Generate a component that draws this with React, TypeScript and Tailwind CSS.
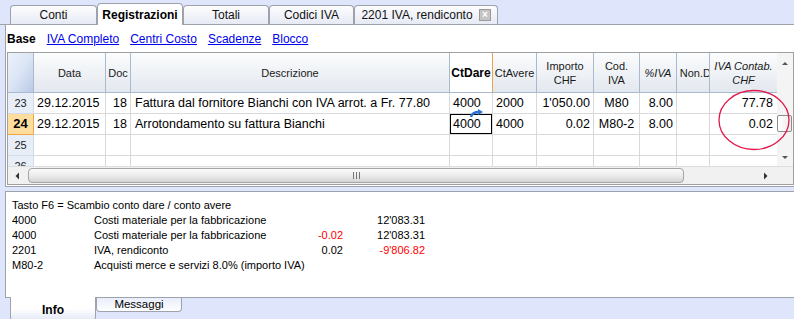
import React from "react";

const gridCols =
  "grid grid-cols-[26px_72px_25px_319px_43px_44px_57px_46px_37px_33px_68px]";

function TopTab({
  label,
  active,
  w,
  close,
}: {
  label: string;
  active?: boolean;
  w: string;
  close?: boolean;
}) {
  if (active) {
    return (
      <div
        className={`${w} h-[22px] -mb-px relative z-10 flex items-center justify-center bg-white border border-b-0 border-[#9ca3ad] rounded-t-[4px] font-bold text-[12px] text-black`}
      >
        {label}
      </div>
    );
  }
  return (
    <div
      className={`${w} h-[19px] flex items-center justify-center bg-gradient-to-b from-[#fdfdfe] to-[#e6eaf4] border border-b-0 border-[#9ca3ad] rounded-t-[4px] text-[12px] text-[#111] relative`}
    >
      <span className={close ? "-ml-[18px]" : ""}>{label}</span>
      {close && (
        <div className="absolute right-[6px] top-[3px] w-[12px] h-[12px] bg-[#c4c4c4] border border-[#9a9a9a] flex items-center justify-center text-white text-[10px] leading-none font-bold">
          ×
        </div>
      )}
    </div>
  );
}

function HeaderCell({
  children,
  className = "",
}: {
  children?: React.ReactNode;
  className?: string;
}) {
  return (
    <div
      className={`h-[40px] flex items-center justify-center text-center leading-[14px] text-[11px] text-[#1a1a1a] border-r border-b border-[#a9bace] bg-gradient-to-b from-[#fbfcfd] to-[#e3e8ef] overflow-hidden whitespace-nowrap ${className}`}
    >
      {children}
    </div>
  );
}

function Cell({
  children,
  align = "left",
  className = "",
}: {
  children?: React.ReactNode;
  align?: "left" | "right" | "center";
  className?: string;
}) {
  const a =
    align === "right"
      ? "justify-end pr-[3px]"
      : align === "center"
      ? "justify-center"
      : "justify-start pl-[3px]";
  return (
    <div
      className={`h-[21px] flex items-center ${a} border-r border-b border-[#d9d9d9] text-[12.5px] text-black whitespace-nowrap overflow-hidden relative ${className}`}
    >
      {children}
    </div>
  );
}

function RowNum({ n, active }: { n: string; active?: boolean }) {
  return (
    <div
      className={
        active
          ? "h-[21px] flex items-center justify-center border-r border-b border-[#f0a848] bg-[#fedd9e] text-[13px] font-bold text-black"
          : "h-[21px] flex items-center justify-center border-r border-b border-[#d3dbe6] bg-[#e8eef8] text-[11px] text-[#222]"
      }
    >
      {n}
    </div>
  );
}

function Row({
  n,
  active,
  cells,
}: {
  n: string;
  active?: boolean;
  cells: (string | null)[];
}) {
  return (
    <>
      <RowNum n={n} active={active} />
      <Cell>{cells[0]}</Cell>
      <Cell align="right">{cells[1]}</Cell>
      <Cell className="pl-[4px]">{cells[2]}</Cell>
      <Cell>
        {cells[3]}
        {active && <div className="absolute inset-0 border border-black" />}
      </Cell>
      <Cell>{cells[4]}</Cell>
      <Cell align="right">{cells[5]}</Cell>
      <Cell align="center">{cells[6]}</Cell>
      <Cell align="right">{cells[7]}</Cell>
      <Cell>{cells[8]}</Cell>
      <Cell align="right" className="pr-[4px]">
        {cells[9]}
      </Cell>
    </>
  );
}

export default function App() {
  const empty = [null, null, null, null, null, null, null, null, null, null];
  return (
    <div className="w-[794px] h-[319px] bg-[#dfe5fa] relative overflow-hidden font-['Liberation_Sans',Arial,sans-serif]">
      {/* top tab strip */}
      <div className="h-[25px] flex items-end pl-[10px] border-b border-[#9ca3ad]">
        <TopTab label="Conti" w="w-[87px]" />
        <TopTab label="Registrazioni" w="w-[86px]" active />
        <TopTab label="Totali" w="w-[86px]" />
        <TopTab label="Codici IVA" w="w-[85px]" />
        <TopTab label="2201 IVA, rendiconto" w="w-[144px]" close />
      </div>

      {/* main panel */}
      <div className="ml-[5px] h-[162px] bg-white border-l border-b border-[#9ca3ad] flex flex-col">
        {/* sub tabs */}
        <div className="h-[27px] flex items-center pl-[1px] text-[12px]">
          <span className="font-bold text-black">Base</span>
          <span className="ml-[11px] text-[#0000ee] underline">IVA Completo</span>
          <span className="ml-[11px] text-[#0000ee] underline">Centri Costo</span>
          <span className="ml-[11px] text-[#0000ee] underline">Scadenze</span>
          <span className="ml-[11px] text-[#0000ee] underline">Blocco</span>
        </div>

        {/* grid */}
        <div className="ml-[1px] border border-[#a0a0a0] flex flex-col h-[133px]">
          <div className="flex h-[113px]">
            <div className="w-[770px] h-[113px] overflow-hidden">
              <div className={gridCols}>
                <div className="h-[40px] border-r border-b border-[#a9bace] bg-gradient-to-br from-[#edf2fb] via-[#dbe5f5] to-[#b9c9e6]" />
                <HeaderCell>Data</HeaderCell>
                <HeaderCell>Doc</HeaderCell>
                <HeaderCell>Descrizione</HeaderCell>
                <HeaderCell className="!bg-none bg-[linear-gradient(to_bottom,#fde6b4,#f9c572)] !border-r-[#eba24a] font-bold text-[12px] !text-black">
                  CtDare
                </HeaderCell>
                <HeaderCell>CtAvere</HeaderCell>
                <HeaderCell>
                  Importo
                  <br />
                  CHF
                </HeaderCell>
                <HeaderCell>
                  Cod.
                  <br />
                  IVA
                </HeaderCell>
                <HeaderCell className="italic">%IVA</HeaderCell>
                <HeaderCell className="justify-end">
                  <span className="-mr-[2px]">Non.D</span>
                </HeaderCell>
                <HeaderCell className="italic">
                  IVA Contab.
                  <br />
                  CHF
                </HeaderCell>

                <Row
                  n="23"
                  cells={[
                    "29.12.2015",
                    "18",
                    "Fattura dal fornitore Bianchi con IVA arrot. a Fr. 77.80",
                    "4000",
                    "2000",
                    "1'050.00",
                    "M80",
                    "8.00",
                    null,
                    "77.78",
                  ]}
                />
                <Row
                  n="24"
                  active
                  cells={[
                    "29.12.2015",
                    "18",
                    "Arrotondamento su fattura Bianchi",
                    "4000",
                    "4000",
                    "0.02",
                    "M80-2",
                    "8.00",
                    null,
                    "0.02",
                  ]}
                />
                <Row n="25" cells={empty} />
                <Row n="26" cells={empty} />
              </div>
            </div>
            {/* vertical scrollbar */}
            <div className="w-[16px] h-[113px] bg-[#f4f4f4] flex flex-col items-center relative">
              <svg width="16" height="16" className="mt-[3px]">
                <path d="M5 9 L8 6 L11 9 Z" fill="#555" />
              </svg>
              <div className="absolute left-0 top-[62px] w-[15px] h-[17px] bg-gradient-to-r from-white to-[#ececec] border border-[#8c8c8c] rounded-[2px]" />
              <svg width="16" height="16" className="absolute bottom-[1px]">
                <path d="M5 7 L8 10 L11 7 Z" fill="#555" />
              </svg>
            </div>
          </div>
          {/* horizontal scrollbar */}
          <div className="flex h-[18px]">
            <div className="w-[770px] h-[18px] bg-[#f1f1f1] border-t border-[#dedede] flex items-center relative">
              <svg width="16" height="16" className="ml-[2px]">
                <path d="M9 4.5 L5.5 8 L9 11.5 Z" fill="#333" />
              </svg>
              <div className="absolute left-[20px] top-[1px] w-[656px] h-[15px] rounded-[4px] border border-[#a5a5a5] bg-gradient-to-b from-[#fafafa] via-[#ececec] to-[#d4d4d4] flex items-center justify-center">
                <div className="flex gap-[2px]">
                  <div className="w-px h-[7px] bg-[#777]" />
                  <div className="w-px h-[7px] bg-[#777]" />
                  <div className="w-px h-[7px] bg-[#777]" />
                </div>
              </div>
              <svg width="16" height="16" className="absolute right-[3px]">
                <path d="M6 4.5 L9.5 8 L6 11.5 Z" fill="#333" />
              </svg>
            </div>
            <div className="w-[16px] h-[18px] bg-[#f1f1f1] border-t border-[#dedede]" />
          </div>
        </div>
      </div>

      {/* info panel */}
      <div className="ml-[5px] mt-[4px] h-[107px] bg-white border border-r-0 border-[#9ca3ad] pl-[6px] pt-[6px] text-[11px] leading-[15px] text-black relative z-0">
        <div>Tasto F6 = Scambio conto dare / conto avere</div>
        <div className="grid grid-cols-[82px_196px_53px_82px]">
          <div>4000</div>
          <div>Costi materiale per la fabbricazione</div>
          <div className="text-right"></div>
          <div className="text-right">12'083.31</div>

          <div>4000</div>
          <div>Costi materiale per la fabbricazione</div>
          <div className="text-right text-[#ff0000]">-0.02</div>
          <div className="text-right">12'083.31</div>

          <div>2201</div>
          <div>IVA, rendiconto</div>
          <div className="text-right">0.02</div>
          <div className="text-right text-[#ff0000]">-9'806.82</div>

          <div>M80-2</div>
          <div className="whitespace-nowrap">
            Acquisti merce e servizi 8.0% (importo IVA)
          </div>
          <div />
          <div />
        </div>
      </div>

      {/* bottom tabs */}
      <div className="flex pl-[10px] -mt-px relative z-10">
        <div className="w-[86px] h-[24px] bg-gradient-to-b from-white via-white to-[#e4e9f7] border border-t-0 border-[#9ca3ad] rounded-b-[4px] flex items-center justify-center pt-[2px] text-[12px] font-bold text-black">
          Info
        </div>
        <div className="w-[86px] h-[14px] mt-px bg-gradient-to-b from-[#e9edfb] to-white border border-t-0 border-[#9ca3ad] rounded-b-[4px] flex items-center justify-center pt-[1px] text-[11.5px] text-black">
          Messaggi
        </div>
      </div>

      {/* overlay: blue arrow */}
      <svg
        className="absolute left-[469px] top-[109px]"
        width="16"
        height="10"
        viewBox="0 0 16 10"
      >
        <path
          d="M2 8 C3 4 6 3 10 3"
          stroke="#2a6fd6"
          strokeWidth="2.4"
          fill="none"
        />
        <path d="M9 0 L14 3 L9 6 Z" fill="#2a6fd6" />
      </svg>

      {/* overlay: red ellipse */}
      <svg
        className="absolute left-0 top-0 pointer-events-none"
        width="794"
        height="319"
      >
        <ellipse
          cx="754"
          cy="120"
          rx="35"
          ry="29.5"
          fill="none"
          stroke="#e3194c"
          strokeWidth="1.3"
        />
      </svg>
    </div>
  );
}
